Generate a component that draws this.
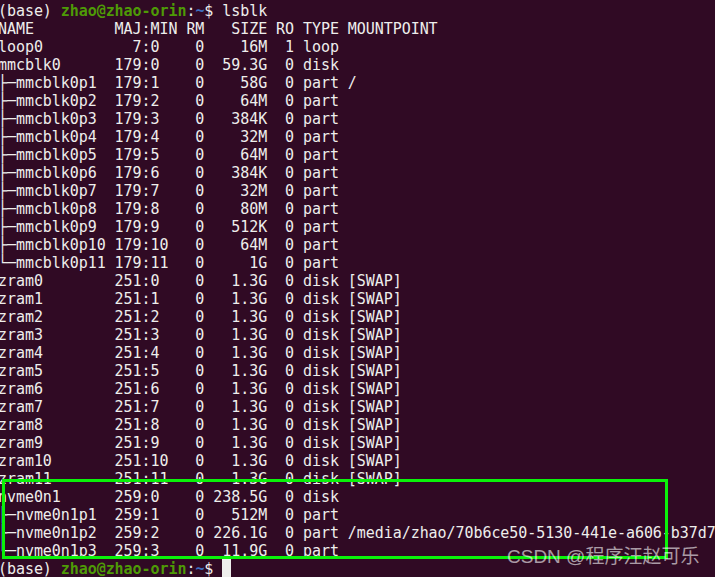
// lsblk 터미널 스크린샷
const mono = { fontFamily: '"DejaVu Sans Mono", "Liberation Mono", monospace' };

function row(name, maj, min, rm, size, ro, type, mount = "") {
    return (
        name.padEnd(13) +
        String(maj).padStart(3) + ":" + String(min).padEnd(3) + " " +
        String(rm).padStart(2) + " " +
        size.padStart(6) + " " +
        String(ro).padStart(2) + " " +
        type.padEnd(4) + " " + mount
    );
}

const mmcSizes = ["58G", "64M", "384K", "32M", "64M", "384K", "32M", "80M", "512K", "64M", "1G"];

const lines = [
    "NAME         MAJ:MIN RM   SIZE RO TYPE MOUNTPOINT",
    row("loop0", 7, 0, 0, "16M", 1, "loop"),
    row("mmcblk0", 179, 0, 0, "59.3G", 0, "disk"),
    ...mmcSizes.map((s, i) =>
        row((i === 10 ? "└─" : "├─") + "mmcblk0p" + (i + 1), 179, i + 1, 0, s, 0, "part", i === 0 ? "/" : "")
    ),
    ...Array.from({ length: 12 }, (_, i) => row("zram" + i, 251, i, 0, "1.3G", 0, "disk", "[SWAP]")),
    row("nvme0n1", 259, 0, 0, "238.5G", 0, "disk"),
    row("├─nvme0n1p1", 259, 1, 0, "512M", 0, "part"),
    row("├─nvme0n1p2", 259, 2, 0, "226.1G", 0, "part", "/media/zhao/70b6ce50-5130-441e-a606-b37d7e4c1a90"),
    row("└─nvme0n1p3", 259, 3, 0, "11.9G", 0, "part"),
];

function Prompt({ children }) {
    return (
        <div className="h-[18px] whitespace-pre">
            <span>(base) </span>
            <span className="font-bold text-[#4e9a06]">zhao@zhao-orin</span>
            <span>:</span>
            <span className="font-bold text-[#3d6fc0]">~</span>
            <span>$ </span>
            {children}
        </div>
    );
}

export default function App() {
    return (
        <div className="relative w-[715px] h-[577px] overflow-hidden bg-[#300a24] text-[#eeeeec]">
            <div className="-ml-[2px] pt-[2px] text-[15px] leading-[18px] tracking-[-0.06px]" style={mono}>
                <Prompt>lsblk</Prompt>
                {lines.map((l, i) => (
                    <div key={i} className="h-[18px] whitespace-pre">{l}</div>
                ))}
                <Prompt>
                    <span className="inline-block w-[9px] h-[18px] -mt-[1px] align-top bg-[#eeeeec]"></span>
                </Prompt>
            </div>

            {/* 강조 박스 */}
            <div className="absolute left-[2px] top-[479px] w-[666px] h-[80px] border-[3px] border-[#0af20a]"></div>

            {/* 워터마크 */}
            <div
                className="absolute left-[507px] top-[546px] text-[19px] leading-[22px] text-white/60 whitespace-nowrap"
                style={{ fontFamily: '"Liberation Sans", "Noto Sans CJK SC", sans-serif' }}
            >
                CSDN @程序汪赵可乐
            </div>
        </div>
    );
}
